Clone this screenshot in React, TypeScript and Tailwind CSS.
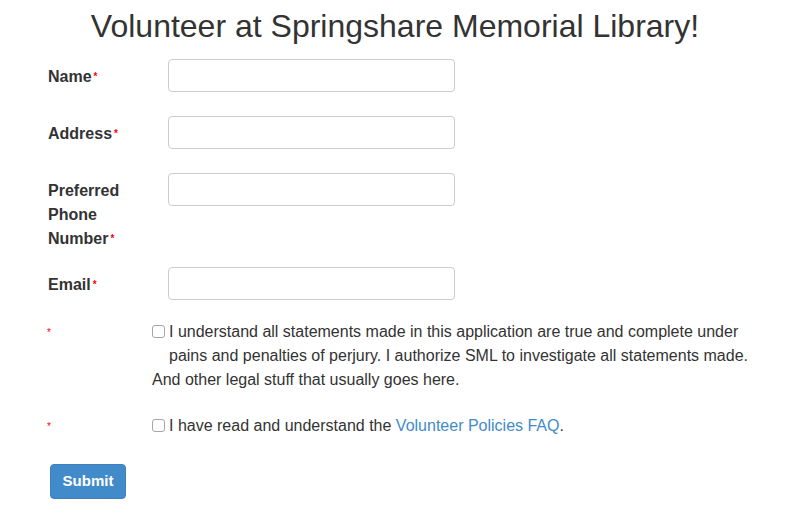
const font = { fontFamily: '"Liberation Sans", Arial, sans-serif' };

function Req() {
  return <span className="text-[10px] text-[#ff0000] relative -top-[2px] ml-[2px]">*</span>;
}

function Row({ label, className = '' }: { label: React.ReactNode; className?: string }) {
  return (
    <div className={`flex ${className}`}>
      <label className="w-[120px] shrink-0 pt-[6px] text-[16px] leading-[24px] font-bold text-[#333]">
        {label}
        <Req />
      </label>
      <input
        type="text"
        className="w-[287px] h-[33px] border border-[#ccc] rounded-[4px] bg-white outline-none"
      />
    </div>
  );
}

function Box() {
  return (
    <input
      type="checkbox"
      className="appearance-none w-[13px] h-[13px] border border-[#a5a5a5] rounded-[3px] bg-white shrink-0 mt-[5px] mr-[4px]"
    />
  );
}

export default function App() {
  return (
    <main className="min-h-screen bg-white text-[#333]" style={font}>
      <h1 className="pt-[8px] text-center text-[32px] leading-[36px] font-normal">
        Volunteer at Springshare Memorial Library!
      </h1>

      <div className="pl-[48px]">
        <Row label="Name" className="mt-[15px]" />
        <Row label="Address" className="mt-[24px]" />
        <Row
          label={
            <>
              Preferred
              <br />
              Phone
              <br />
              Number
            </>
          }
          className="mt-[24px]"
        />
        <Row label="Email" className="mt-[14px]" />

        {/* Agreement */}
        <div className="flex mt-[20px] text-[16px] leading-[24px]">
          <span className="w-[105px] shrink-0 -ml-[1px] text-[10px] leading-[26px] text-[#ff0000]">*</span>
          <div>
            <div className="flex">
              <Box />
              <span>
                I understand all statements made in this application are true and complete under
                <br />
                pains and penalties of perjury. I authorize SML to investigate all statements made.
              </span>
            </div>
            <div>And other legal stuff that usually goes here.</div>
          </div>
        </div>

        <div className="flex mt-[22px] text-[16px] leading-[24px]">
          <span className="w-[105px] shrink-0 -ml-[1px] text-[10px] leading-[26px] text-[#ff0000]">*</span>
          <div className="flex">
            <Box />
            <span>
              I have read and understand the{' '}
              <a href="#" className="text-[#428bca]">
                Volunteer Policies FAQ
              </a>
              .
            </span>
          </div>
        </div>

        <button
          type="button"
          className="mt-[24px] ml-[2px] w-[76px] h-[35px] rounded-[4px] bg-[#428bca] text-white text-[15px] font-bold border border-[#3d80ba]"
        >
          Submit
        </button>
      </div>
    </main>
  );
}
